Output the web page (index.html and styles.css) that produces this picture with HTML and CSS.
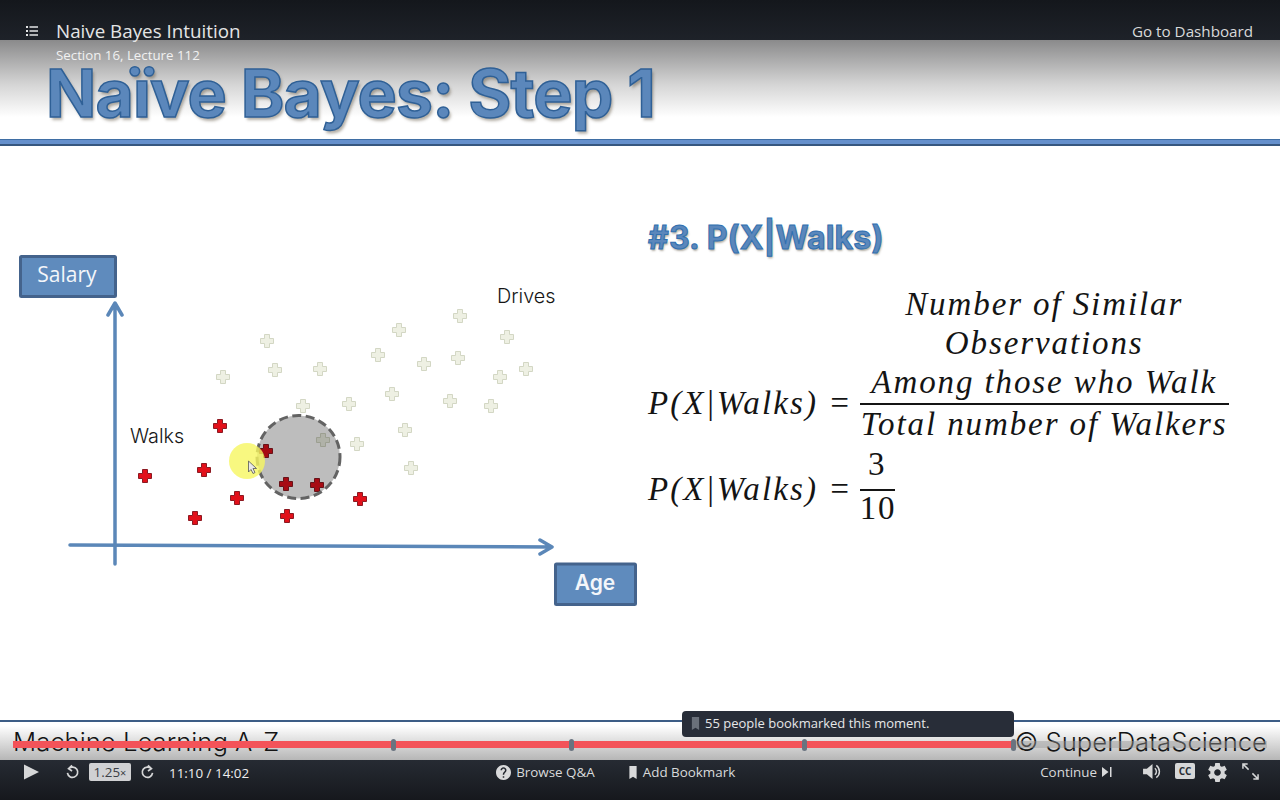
FILE: index.html
```html
<!DOCTYPE html>
<html>
<head>
    <title>Naive Bayes Intuition</title>
    <link rel="stylesheet" href="styles.css">
</head>
<body>
    <div class="player">
        <div class="topbar">
            <svg class="list-icon" viewBox="0 0 12 12"><path d="M0 1h2v2H0zM0 5h2v2H0zM0 9h2v2H0zM3.500 1.300H12v1.400H3.500zM3.500 5.300H12v1.400H3.500zM3.500 9.300H12v1.400H3.500z"/></svg>
            <div class="lecture">
                <div class="lecture-title">Naive Bayes Intuition</div>
                <div class="lecture-sub">Section 16, Lecture 112</div>
            </div>
            <a class="dashboard">Go to Dashboard</a>
        </div>

        <div class="slide">
            <div class="slide-head">
                <h1>Naïve Bayes: Step 1</h1>
            </div>
            <div class="slide-rule"></div>
            <div class="slide-body">
                <svg class="plot" viewBox="0 146 640 574">
                    <defs>
                        <path id="cross" d="M-2.500 -6.500H2.500V-2.500H6.500V2.500H2.500V6.500H-2.500V2.500H-6.500V-2.500H-2.500Z"/>
                    </defs>

                    <g class="axis">
                        <path d="M115 564V304M108 315L115 303L122 315"/>
                        <path d="M70 545L552 547M540 540L552 547L540 554"/>
                    </g>

                    <rect class="axis-box" x="20.500" y="256.500" width="95" height="40" rx="1"/>
                    <text class="axis-name" x="67" y="282">Salary</text>
                    <rect class="axis-box" x="555.500" y="564" width="80" height="40.500" rx="1"/>
                    <text class="axis-name axis-age" x="595" y="590">Age</text>

                    <text class="group-name" x="130" y="443">Walks</text>
                    <text class="group-name" x="497" y="303">Drives</text>

                    <g class="drives">
                        <use href="#cross" x="267" y="341"/>
                        <use href="#cross" x="223" y="377"/>
                        <use href="#cross" x="275" y="370"/>
                        <use href="#cross" x="320" y="369"/>
                        <use href="#cross" x="303" y="406"/>
                        <use href="#cross" x="349" y="404"/>
                        <use href="#cross" x="323" y="440"/>
                        <use href="#cross" x="357" y="444"/>
                        <use href="#cross" x="405" y="430"/>
                        <use href="#cross" x="411" y="468"/>
                        <use href="#cross" x="392" y="394"/>
                        <use href="#cross" x="378" y="355"/>
                        <use href="#cross" x="399" y="330"/>
                        <use href="#cross" x="424" y="364"/>
                        <use href="#cross" x="458" y="358"/>
                        <use href="#cross" x="460" y="316"/>
                        <use href="#cross" x="507" y="337"/>
                        <use href="#cross" x="500" y="377"/>
                        <use href="#cross" x="526" y="369"/>
                        <use href="#cross" x="450" y="401"/>
                        <use href="#cross" x="491" y="406"/>
                    </g>
                    <g class="walks">
                        <use href="#cross" x="220" y="426"/>
                        <use href="#cross" x="145" y="476"/>
                        <use href="#cross" x="204" y="470"/>
                        <use href="#cross" x="266" y="451"/>
                        <use href="#cross" x="237" y="498"/>
                        <use href="#cross" x="286" y="484"/>
                        <use href="#cross" x="317" y="485"/>
                        <use href="#cross" x="195" y="518"/>
                        <use href="#cross" x="287" y="516"/>
                        <use href="#cross" x="360" y="499"/>
                    </g>

                    <circle class="similar" cx="298.500" cy="457" r="41.500"/>
                    <circle class="pointer-glow" cx="247" cy="461" r="18"/>
                    <path class="pointer" d="M248.500 461V472L251 469.500L253 473.500L255 472.500L253 468.500H256.500Z"/>
                </svg>

                <div class="notes">
                    <h2>#3. P(X|Walks)</h2>
                    <div class="eq eq-main">
                        <span class="eq-left">P(X|Walks) =</span>
                        <div class="frac">
                            <div class="frac-top">Number of Similar<br>Observations<br>Among those who Walk</div>
                            <div class="frac-bottom">Total number of Walkers</div>
                        </div>
                    </div>
                    <div class="eq eq-result">
                        <span class="eq-left">P(X|Walks) =</span>
                        <div class="frac frac-num">
                            <div class="frac-top">3</div>
                            <div class="frac-bottom">10</div>
                        </div>
                    </div>
                </div>
            </div>
            <div class="slide-foot">
                <span>Machine Learning A-Z</span>
                <span>© SuperDataScience</span>
            </div>

            <div class="seekbar">
                <div class="seek-done"></div>
                <div class="seek-mark mark-a"></div>
                <div class="seek-mark mark-b"></div>
                <div class="seek-mark mark-c"></div>
                <div class="seek-mark mark-d"></div>
            </div>
            <div class="bookmark-tip">
                <svg class="tip-icon" viewBox="6 3 12 18"><path d="M7 3h10v18l-5-3-5 3z"/></svg>
                55 people bookmarked this moment.
            </div>
        </div>

        <div class="controls">
            <svg class="play" viewBox="0 0 16 16"><path d="M0 0L16 8L0 16Z"/></svg>
            <svg class="ctl-icon rewind" viewBox="0 0 16 16"><path d="M4 4.500A5.500 5.500 0 1 1 2.600 9M7.500 1L3.800 4.500L7.500 7"/></svg>
            <span class="speed">1.25<small>×</small></span>
            <svg class="ctl-icon forward" viewBox="0 0 16 16"><path d="M12 4.500A5.500 5.500 0 1 0 13.400 9M8.500 1L12.200 4.500L8.500 7"/></svg>
            <span class="time">11:10 / 14:02</span>

            <div class="mid-actions">
                <a class="action">
                    <svg class="action-icon" viewBox="2 2 20 20"><path d="M12 2C6.480 2 2 6.480 2 12s4.480 10 10 10 10-4.480 10-10S17.520 2 12 2zm1 17h-2v-2h2v2zm2.070-7.750l-.9.920C13.450 12.900 13 13.500 13 15h-2v-.5c0-1.100.45-2.100 1.170-2.830l1.240-1.260c.37-.36.59-.86.59-1.410 0-1.100-.9-2-2-2s-2 .9-2 2H8c0-2.210 1.790-4 4-4s4 1.790 4 4c0 .88-.36 1.680-.93 2.250z"/></svg>
                    Browse Q&amp;A
                </a>
                <a class="action">
                    <svg class="action-icon mark-icon" viewBox="6 3 12 18"><path d="M7 3h10v18l-5-3-5 3z"/></svg>
                    Add Bookmark
                </a>
            </div>

            <a class="continue">
                Continue
                <svg class="skip" viewBox="0 0 10 10"><path d="M0 0L6.500 5L0 10Z"/><path d="M8 0h1.500v10H8z"/></svg>
            </a>
            <svg class="volume" viewBox="0 0 20 18"><path d="M0 6H4L10 1V17L4 12H0Z"/><path class="wave" d="M12.500 5.500A4.500 4.500 0 0 1 12.500 12.500M14 2.500A8 8 0 0 1 14 15.500"/></svg>
            <span class="cc">CC</span>
            <svg class="gear" viewBox="2 2 20 20"><path d="M19.430 12.980c.04-.32.07-.64.07-.98s-.03-.66-.07-.98l2.110-1.650c.19-.15.24-.42.12-.64l-2-3.460c-.12-.22-.39-.3-.61-.22l-2.490 1c-.52-.4-1.080-.73-1.690-.98l-.38-2.650C14.460 2.180 14.250 2 14 2h-4c-.25 0-.46.18-.49.42l-.38 2.650c-.61.25-1.170.59-1.690.98l-2.490-1c-.23-.09-.49 0-.61.22l-2 3.460c-.13.22-.07.49.12.64l2.110 1.650c-.04.32-.07.65-.07.98s.03.66.07.98l-2.110 1.650c-.19.15-.24.42-.12.64l2 3.460c.12.22.39.3.61.22l2.490-1c.52.4 1.080.73 1.690.98l.38 2.650c.03.24.24.42.49.42h4c.25 0 .46-.18.49-.42l.38-2.650c.61-.25 1.170-.59 1.690-.98l2.490 1c.23.09.49 0 .61-.22l2-3.460c.12-.22.07-.49-.12-.64l-2.110-1.650zM12 15.500c-1.930 0-3.500-1.570-3.500-3.500s1.570-3.500 3.500-3.500 3.500 1.570 3.500 3.500-1.570 3.500-3.500 3.500z"/></svg>
            <svg class="expand" viewBox="0 0 18 18"><path d="M1 1L7 7M1 6V1H6M17 17L11 11M17 12V17H12"/></svg>
        </div>
    </div>
</body>
</html>
```

FILE: styles.css
```css
html, body {
    margin: 0;
    padding: 0;
}
body {
    font-family: "Open Sans", sans-serif;
    background: #ffffff;
}
a {
    text-decoration: none;
}
.player {
    width: 1280px;
    height: 800px;
    display: flex;
    flex-direction: column;
    overflow: hidden;
}

/* top bar */
.topbar {
    height: 40px;
    flex: none;
    background: linear-gradient(#14171c, #1e2229);
    display: flex;
    align-items: flex-start;
    padding: 21px 27px 0 26px;
    box-sizing: border-box;
    color: #e4e5e6;
    position: relative;
    z-index: 2;
}
.list-icon {
    width: 12px;
    height: 12px;
    margin-top: 4px;
    fill: #e4e5e6;
}
.lecture {
    margin-left: 18px;
    flex: 1;
}
.lecture-title {
    font-size: 18.800px;
    line-height: 21px;
    color: #e4e5e6;
}
.lecture-sub {
    font-size: 13.300px;
    line-height: 18px;
    margin-top: 4px;
    color: #f1f1f1;
}
.dashboard {
    font-size: 15.200px;
    font-weight: 500;
    line-height: 20px;
    color: #d8d9da;
}

/* slide */
.slide {
    flex: 1;
    display: flex;
    flex-direction: column;
    position: relative;
    background: #ffffff;
}
.slide-head {
    height: 99px;
    flex: none;
    background: linear-gradient(#8a8a8b, #d5d5d5 45%, #ffffff 78%);
    padding-left: 46px;
    box-sizing: border-box;
}
h1 {
    margin: 0;
    padding-top: 25px;
    font-family: "Inter", sans-serif;
    font-size: 66px;
    line-height: 56px;
    font-weight: 700;
    letter-spacing: -0.850px;
    color: #5b87bb;
    -webkit-text-stroke: 1.500px #2f6096;
    text-shadow: 2px 3px 3px rgba(90, 80, 60, 0.45);
    white-space: nowrap;
}
.slide-rule {
    height: 7px;
    flex: none;
    box-sizing: border-box;
    background: #6590cc;
    border-top: 1px solid #3f6ea4;
    border-bottom: 2px solid #36577f;
}
.slide-body {
    flex: 1;
    display: grid;
    grid-template-columns: 648px 1fr;
}
.plot {
    width: 640px;
    height: 574px;
    display: block;
}
.axis path {
    fill: none;
    stroke: #5b87b8;
    stroke-width: 3.500;
    stroke-linecap: round;
    stroke-linejoin: round;
}
.axis-box {
    fill: #5f8bbd;
    stroke: #44638c;
    stroke-width: 3;
}
.axis-name {
    font-family: "Open Sans", sans-serif;
    font-size: 21px;
    font-weight: 500;
    fill: #f3f6fa;
    text-anchor: middle;
}
.axis-age {
    font-family: "Inter", sans-serif;
    font-size: 21px;
    font-weight: 600;
}
.group-name {
    font-family: "Inter", sans-serif;
    font-size: 19.800px;
    font-weight: 300;
    fill: #161616;
}
.drives use {
    fill: #eef0e3;
    stroke: #d3d7c4;
    stroke-width: 1;
}
.walks use {
    fill: #e2101a;
    stroke: #8c1a22;
    stroke-width: 1;
}
.similar {
    fill: rgba(0, 0, 0, 0.26);
    stroke: #636363;
    stroke-width: 3;
    stroke-dasharray: 9 4.500;
}
.pointer-glow {
    fill: #f6f660;
    opacity: 0.8;
}
.pointer {
    fill: #e8e8e8;
    stroke: #555555;
    stroke-width: 0.800;
}

/* right side text */
.notes {
    color: #141414;
    font-family: "Liberation Serif", serif;
    font-style: italic;
}
h2 {
    margin: 0;
    padding-top: 72px;
    font-family: "Inter", sans-serif;
    font-style: normal;
    font-size: 32px;
    line-height: 40px;
    font-weight: 700;
    letter-spacing: 0.150px;
    color: #5b87bb;
    -webkit-text-stroke: 1px #2f6fb0;
    text-shadow: 1px 2px 2px rgba(90, 80, 60, 0.45);
}
.eq {
    display: flex;
    align-items: flex-end;
    font-size: 33px;
    letter-spacing: 2.100px;
}
.eq-main {
    margin-top: 27px;
}
.eq-main .eq-left {
    margin-bottom: 20px;
}
.eq-result {
    margin-top: 2px;
}
.eq-result .eq-left {
    margin-bottom: 17px;
}
.eq-left {
    line-height: 40px;
    white-space: nowrap;
}
.frac {
    width: 369px;
    margin-left: 7px;
    text-align: center;
    letter-spacing: 1.900px;
}
.frac-top {
    line-height: 39px;
    border-bottom: 2px solid #141414;
    padding-bottom: 1px;
}
.frac-bottom {
    line-height: 38px;
}
.frac-num {
    font-style: normal;
    width: 35px;
}
.frac-num .frac-top {
    padding-bottom: 5px;
}
.frac-num .frac-bottom {
    line-height: 35px;
}

/* slide footer */
.slide-foot {
    height: 40px;
    flex: none;
    box-sizing: border-box;
    border-top: 2px solid #3d5d86;
    background: linear-gradient(#ffffff 10%, #b6b6b6);
    display: flex;
    justify-content: space-between;
    padding: 0 13px;
    font-family: "Inter", sans-serif;
    font-size: 25.700px;
    font-weight: 300;
    line-height: 40px;
    color: #141414;
}

/* seek bar over the slide */
.seekbar {
    position: absolute;
    left: 13px;
    right: 13px;
    top: 701px;
    height: 7px;
    background: rgba(150, 150, 150, 0.45);
}
.seek-done {
    width: 1001px;
    height: 7px;
    background: #f35359;
}
.seek-mark {
    position: absolute;
    top: -2px;
    width: 5px;
    height: 12px;
    border-radius: 3px;
    background: #6a7480;
}
.mark-a { left: 378px; }
.mark-b { left: 556px; }
.mark-c { left: 789px; }
.mark-d { left: 998px; }
.bookmark-tip {
    position: absolute;
    left: 682px;
    top: 671px;
    width: 332px;
    height: 26px;
    box-sizing: border-box;
    background: #282d38;
    border-radius: 4px;
    padding: 0 0 2px 9px;
    display: flex;
    align-items: center;
    gap: 5px;
    font-size: 13px;
    color: #e6e7e8;
}
.tip-icon {
    width: 9px;
    height: 13px;
    fill: #6a707a;
}

/* bottom controls */
.controls {
    height: 40px;
    flex: none;
    background: linear-gradient(#262b33, #16181d);
    display: flex;
    align-items: flex-start;
    box-sizing: border-box;
    padding: 3px 21px 0 24px;
    color: #d9dadb;
    font-size: 13.400px;
    font-weight: 500;
    position: relative;
    z-index: 2;
}
.play {
    width: 15px;
    height: 16px;
    margin-top: 1px;
    fill: #d6d7d8;
}
.ctl-icon {
    width: 15px;
    height: 16px;
    fill: none;
    stroke: #d6d7d8;
    stroke-width: 1.800;
}
.rewind {
    margin: 1px 0 0 26px;
}
.speed {
    width: 42px;
    height: 18px;
    margin: 0 9px 0 9px;
    background: #d0d1d3;
    border-radius: 2px;
    color: #3b3f46;
    font-weight: 400;
    line-height: 18px;
    text-align: center;
}
.speed small {
    font-size: 11px;
}
.forward {
    margin-top: 1px;
}
.time {
    margin-left: 14px;
    line-height: 20px;
    color: #eeeeee;
}
.mid-actions {
    flex: 1;
    display: flex;
    padding-left: 247px;
    gap: 33px;
}
.action {
    display: flex;
    align-items: center;
    gap: 5px;
    height: 18px;
    color: #d9dadb;
}
.action-icon {
    width: 15px;
    height: 15px;
    fill: #d9dadb;
}
.mark-icon {
    width: 10px;
    height: 13px;
}
.continue {
    display: flex;
    align-items: center;
    gap: 5px;
    height: 18px;
    color: #d9dadb;
}
.skip {
    width: 10px;
    height: 10px;
    fill: #d9dadb;
}
.volume {
    width: 19px;
    height: 17px;
    margin-left: 31px;
    fill: #d6d7d8;
}
.volume .wave {
    fill: none;
    stroke: #d6d7d8;
    stroke-width: 1.500;
}
.cc {
    width: 20px;
    height: 16px;
    margin-left: 13px;
    background: #d6d7d8;
    border-radius: 2px;
    color: #2a2e35;
    font-size: 10px;
    font-weight: 700;
    line-height: 16px;
    text-align: center;
}
.gear {
    width: 19px;
    height: 19px;
    margin-left: 13px;
    fill: #d6d7d8;
}
.expand {
    width: 17px;
    height: 17px;
    margin-left: 15px;
    fill: none;
    stroke: #d6d7d8;
    stroke-width: 1.600;
}
```
